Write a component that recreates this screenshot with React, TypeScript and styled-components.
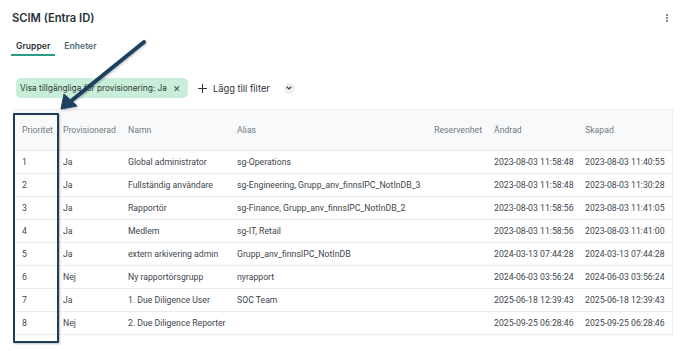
import React from "react";
import styled, { createGlobalStyle } from "styled-components";

const Global = createGlobalStyle`
  html, body { margin: 0; padding: 0; background: #ffffff; }
  body { width: 688px; height: 351px; overflow: hidden; }
`;

const Page = styled.div`
  position: relative;
  width: 688px;
  height: 351px;
  box-sizing: border-box;
  padding: 0 15px 0 12px;
  font-family: Inter, "Noto Sans", sans-serif;
`;

const Header = styled.div`
  height: 38px;
  display: flex;
  align-items: center;
  justify-content: space-between;
  padding-bottom: 2px;
  box-sizing: border-box;
`;

const Title = styled.h1`
  margin: 0;
  font-size: 11.2px;
  font-weight: 600;
  color: #2a3037;
  letter-spacing: 0;
`;

const Kebab = styled.div`
  display: flex;
  flex-direction: column;
  gap: 1.5px;
  margin-right: 5px;
  span {
    width: 1.6px;
    height: 1.6px;
    border-radius: 50%;
    background: #6b7177;
  }
`;

const Tabs = styled.div`
  display: flex;
  gap: 4px;
  margin-left: -1px;
`;

const Tab = styled.div<{ $active?: boolean }>`
  height: 18px;
  box-sizing: border-box;
  padding: 0 5px;
  display: flex;
  align-items: center;
  font-size: 8.6px;
  font-weight: 600;
  color: ${(p) => (p.$active ? "#2b3238" : "#4d6a78")};
  border-bottom: 2px solid ${(p) => (p.$active ? "#2a9c8a" : "transparent")};
`;

const FilterRow = styled.div`
  display: flex;
  align-items: center;
  margin-top: 22px;
  margin-left: 4px;
  height: 20px;
  gap: 10px;
`;

const Chip = styled.div`
  height: 20px;
  display: flex;
  align-items: center;
  gap: 6px;
  padding: 0 7px 0 4px;
  border-radius: 5px;
  background: #c8eed9;
  color: #2d3a36;
  font-size: 8.3px;
  font-weight: 400;
`;

const ChipX = styled.span`
  font-size: 9px;
  color: #3a4a45;
  line-height: 1;
`;

const AddFilter = styled.div`
  display: flex;
  align-items: center;
  gap: 6px;
  color: #2d3338;
  font-size: 9.3px;
  font-weight: 400;
`;

const ChevronCircle = styled.span`
  width: 11px;
  height: 11px;
  border-radius: 50%;
  background: #eef0f2;
  display: inline-flex;
  align-items: center;
  justify-content: center;
  margin-left: 8px;
`;

const TableCard = styled.div`
  margin-top: 11px;
  margin-left: 1px;
  width: 660px;
  border: 1px solid #eceef0;
  border-bottom: none;
  box-sizing: border-box;
`;

const Table = styled.table`
  width: 658px;
  border-collapse: collapse;
  table-layout: fixed;
  font-family: Roboto, "Liberation Sans", sans-serif;
  font-size: 8.7px;
  color: #40464d;
`;

const HeadCell = styled.th<{ $right?: boolean }>`
  height: 40px;
  padding: 0 ${(p) => (p.$right ? "4px" : "0")} 0 8px;
  text-align: ${(p) => (p.$right ? "right" : "left")};
  font-weight: 400;
  color: #737a82;
  background: #f8f9fa;
  border-bottom: 1px solid #e6e8eb;
  white-space: nowrap;
`;

const Cell = styled.td`
  height: 22px;
  padding: 0 0 0 8px;
  border-bottom: 1px solid #e9ebed;
  white-space: nowrap;
  overflow: visible;
`;

const Annotation = styled.div`
  position: absolute;
  left: 0;
  top: 0;
  width: 688px;
  height: 351px;
  pointer-events: none;
`;

const HighlightBox = styled.div`
  position: absolute;
  left: 13px;
  top: 113px;
  width: 46px;
  height: 230px;
  box-sizing: border-box;
  border: 2px solid #1f3b57;
  border-radius: 1px;
  box-shadow: 1px 1px 2px rgba(0, 0, 0, 0.25);
`;

const ArrowSvg = styled.svg`
  position: absolute;
  left: 0;
  top: 0;
`;

const cols = [41, 65, 109, 197, 60, 91, 95];

const rows = [
  ["1", "Ja", "Global administrator", "sg-Operations", "", "2023-08-03 11:58:48", "2023-08-03 11:40:55"],
  ["2", "Ja", "Fullständig användare", "sg-Engineering, Grupp_anv_finnsIPC_NotInDB_3", "", "2023-08-03 11:58:48", "2023-08-03 11:30:28"],
  ["3", "Ja", "Rapportör", "sg-Finance, Grupp_anv_finnsIPC_NotInDB_2", "", "2023-08-03 11:58:56", "2023-08-03 11:41:05"],
  ["4", "Ja", "Medlem", "sg-IT, Retail", "", "2023-08-03 11:58:56", "2023-08-03 11:41:00"],
  ["5", "Ja", "extern arkivering admin", "Grupp_anv_finnsIPC_NotInDB", "", "2024-03-13 07:44:28", "2024-03-13 07:44:28"],
  ["6", "Nej", "Ny rapportörsgrupp", "nyrapport", "", "2024-06-03 03:56:24", "2024-06-03 03:56:24"],
  ["7", "Ja", "1. Due Diligence User", "SOC Team", "", "2025-06-18 12:39:43", "2025-06-18 12:39:43"],
  ["8", "Nej", "2. Due Diligence Reporter", "", "", "2025-09-25 06:28:46", "2025-09-25 06:28:46"],
];

const headers = ["Prioritet", "Provisionerad", "Namn", "Alias", "Reservenhet", "Ändrad", "Skapad"];

export default function App() {
  return (
    <>
      <Global />
      <Page>
        <Header>
          <Title>SCIM (Entra ID)</Title>
          <Kebab>
            <span />
            <span />
            <span />
          </Kebab>
        </Header>
        <Tabs>
          <Tab $active>Grupper</Tab>
          <Tab>Enheter</Tab>
        </Tabs>
        <FilterRow>
          <Chip>
            Visa tillgängliga för provisionering: Ja
            <ChipX>✕</ChipX>
          </Chip>
          <AddFilter>
            <svg width="9" height="9" viewBox="0 0 9 9">
              <path d="M4.5 0.5 V8.5 M0.5 4.5 H8.5" stroke="#2d3338" strokeWidth="1" strokeLinecap="round" />
            </svg>
            Lägg till filter
            <ChevronCircle>
              <svg width="6" height="4" viewBox="0 0 6 4">
                <path d="M1 1 L3 3 L5 1" fill="none" stroke="#3a4046" strokeWidth="1.1" strokeLinecap="round" strokeLinejoin="round" />
              </svg>
            </ChevronCircle>
          </AddFilter>
        </FilterRow>
        <TableCard>
          <Table>
            <colgroup>
              {cols.map((w, i) => (
                <col key={i} style={{ width: w }} />
              ))}
            </colgroup>
            <thead>
              <tr>
                {headers.map((h, i) => (
                  <HeadCell key={h} $right={i === 4}>
                    {h}
                  </HeadCell>
                ))}
              </tr>
            </thead>
            <tbody>
              {rows.map((r) => (
                <tr key={r[0]}>
                  {r.map((c, i) => (
                    <Cell key={i}>{c}</Cell>
                  ))}
                </tr>
              ))}
            </tbody>
          </Table>
        </TableCard>
        <Annotation>
          <HighlightBox />
          <ArrowSvg width="688" height="351" viewBox="0 0 688 351">
            <defs>
              <filter id="sh" x="-20%" y="-20%" width="140%" height="140%">
                <feDropShadow dx="1" dy="1" stdDeviation="1" floodColor="#000" floodOpacity="0.25" />
              </filter>
            </defs>
            <g filter="url(#sh)" fill="#1d3f5e" stroke="#1d3f5e">
              <line x1="144" y1="42" x2="71" y2="101" strokeWidth="4" strokeLinecap="round" />
              <polygon points="61,109 64,94 77,106" strokeWidth="1" strokeLinejoin="round" />
            </g>
          </ArrowSvg>
        </Annotation>
      </Page>
    </>
  );
}
